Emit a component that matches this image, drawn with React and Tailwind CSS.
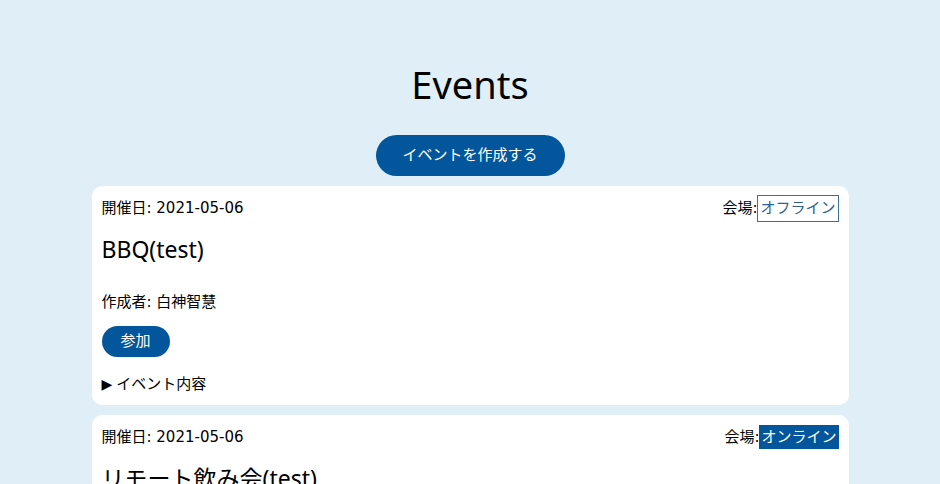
import React from 'react';

const events = [
    { date: '2021-05-06', title: 'BBQ(test)', author: '白神智慧', venue: 'オフライン', online: false },
    { date: '2021-05-06', title: 'リモート飲み会(test)', author: '白神智慧', venue: 'オンライン', online: true },
];

const EventCard = ({ event }) => (
    <div className="bg-white rounded-[10px] px-[10px] pt-[11px] pb-[10px]">
        <div className="flex justify-between items-center h-[22px]">
            <span>開催日: {event.date}</span>
            <span className="flex items-center">
                会場:
                {event.online ? (
                    <span className="bg-[#03569b] text-white px-[2px] leading-[24px]">{event.venue}</span>
                ) : (
                    <span className="border border-[#3a6e9c] text-[#2d5f8f] px-[2px] leading-[25px]">{event.venue}</span>
                )}
            </span>
        </div>
        <h2 className="text-[23px] mt-[15px] leading-[30px] font-['Noto_Sans','Noto_Sans_CJK_JP',sans-serif]">{event.title}</h2>
        <p className="mt-[27px] leading-[22px]">作成者: {event.author}</p>
        <button className="mt-[13px] bg-[#03569b] text-white rounded-full w-[68px] h-[31px]">参加</button>
        <div className="mt-[16px] flex items-center leading-[22px]">
            <span className="text-[14px] mr-[4px]">▶</span>
            イベント内容
        </div>
    </div>
);

const App = () => {
    return (
        <div className="min-h-screen bg-[#e0eef7] text-black text-[15px] font-['DejaVu_Sans','Noto_Sans_CJK_JP',sans-serif] pt-[58px]">
            <h1 className="text-center text-[38px] leading-[52px] font-['Noto_Sans',sans-serif]">Events</h1>
            <div className="flex justify-center mt-[25px]">
                <button className="bg-[#03569b] text-white rounded-full w-[189px] h-[41px]">
                    イベントを作成する
                </button>
            </div>
            <div className="w-[757px] mx-auto mt-[10px] flex flex-col gap-[10px]">
                {events.map((e, i) => (
                    <EventCard key={i} event={e} />
                ))}
            </div>
        </div>
    );
};

export default App;
